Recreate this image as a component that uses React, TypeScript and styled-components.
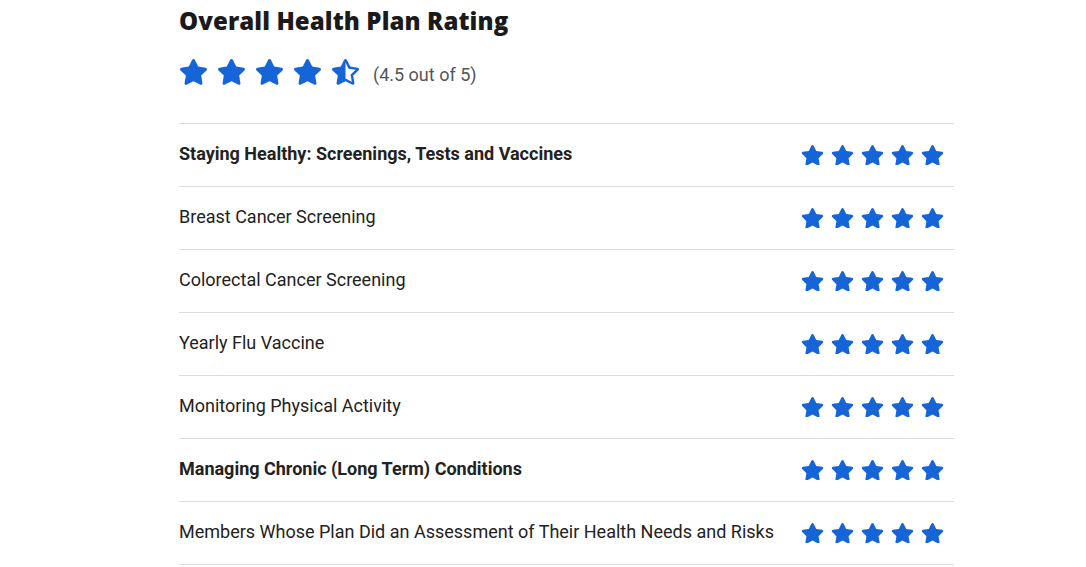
import React from "react";
import styled, { createGlobalStyle } from "styled-components";
import { FaStar, FaStarHalfAlt } from "react-icons/fa";

const Global = createGlobalStyle`
  html, body { margin: 0; padding: 0; background: #fff; }
  body { font-family: Roboto, "Liberation Sans", sans-serif; }
`;

const Page = styled.div`
  width: 775px;
  margin-left: 179px;
  padding-top: 5px;
`;

const Title = styled.h2`
  margin: 0;
  font-family: "Open Sans", "Liberation Sans", sans-serif;
  font-weight: 800;
  font-size: 24px;
  line-height: 32px;
  color: #1a1a1a;
  letter-spacing: 0.1px;
`;

const Summary = styled.div`
  display: flex;
  align-items: center;
  margin-top: 20px;
  height: 30px;
  margin-bottom: 36px;
`;

const Stars = styled.div<{ $size: number; $gap: number }>`
  display: flex;
  align-items: center;
  gap: ${(p) => p.$gap}px;
  color: #1565d8;
  svg {
    width: ${(p) => p.$size}px;
    height: ${(p) => p.$size * 0.89}px;
    display: block;
  }
`;

const Note = styled.span`
  margin-left: 13px;
  margin-top: 5px;
  font-size: 18px;
  color: #555;
`;

const List = styled.div`
  border-top: 1px solid #dcdcdc;
`;

const Row = styled.div`
  display: flex;
  align-items: center;
  justify-content: space-between;
  height: 62px;
  border-bottom: 1px solid #dcdcdc;
  padding-right: 10px;
`;

const Label = styled.span<{ $bold?: boolean }>`
  font-size: 18px;
  color: #222;
  margin-bottom: 3px;
  font-weight: ${(p) => (p.$bold ? 700 : 400)};
`;

const rows = [
  { label: "Staying Healthy: Screenings, Tests and Vaccines", bold: true },
  { label: "Breast Cancer Screening" },
  { label: "Colorectal Cancer Screening" },
  { label: "Yearly Flu Vaccine" },
  { label: "Monitoring Physical Activity" },
  { label: "Managing Chronic (Long Term) Conditions", bold: true },
  { label: "Members Whose Plan Did an Assessment of Their Health Needs and Risks" },
];

export default function App() {
  return (
    <>
      <Global />
      <Page>
        <Title>Overall Health Plan Rating</Title>
        <Summary>
          <Stars $size={29} $gap={9}>
            <FaStar />
            <FaStar />
            <FaStar />
            <FaStar />
            <FaStarHalfAlt />
          </Stars>
          <Note>(4.5 out of 5)</Note>
        </Summary>
        <List>
          {rows.map((r) => (
            <Row key={r.label}>
              <Label $bold={r.bold}>{r.label}</Label>
              <Stars $size={23} $gap={7}>
                <FaStar />
                <FaStar />
                <FaStar />
                <FaStar />
                <FaStar />
              </Stars>
            </Row>
          ))}
        </List>
      </Page>
    </>
  );
}
